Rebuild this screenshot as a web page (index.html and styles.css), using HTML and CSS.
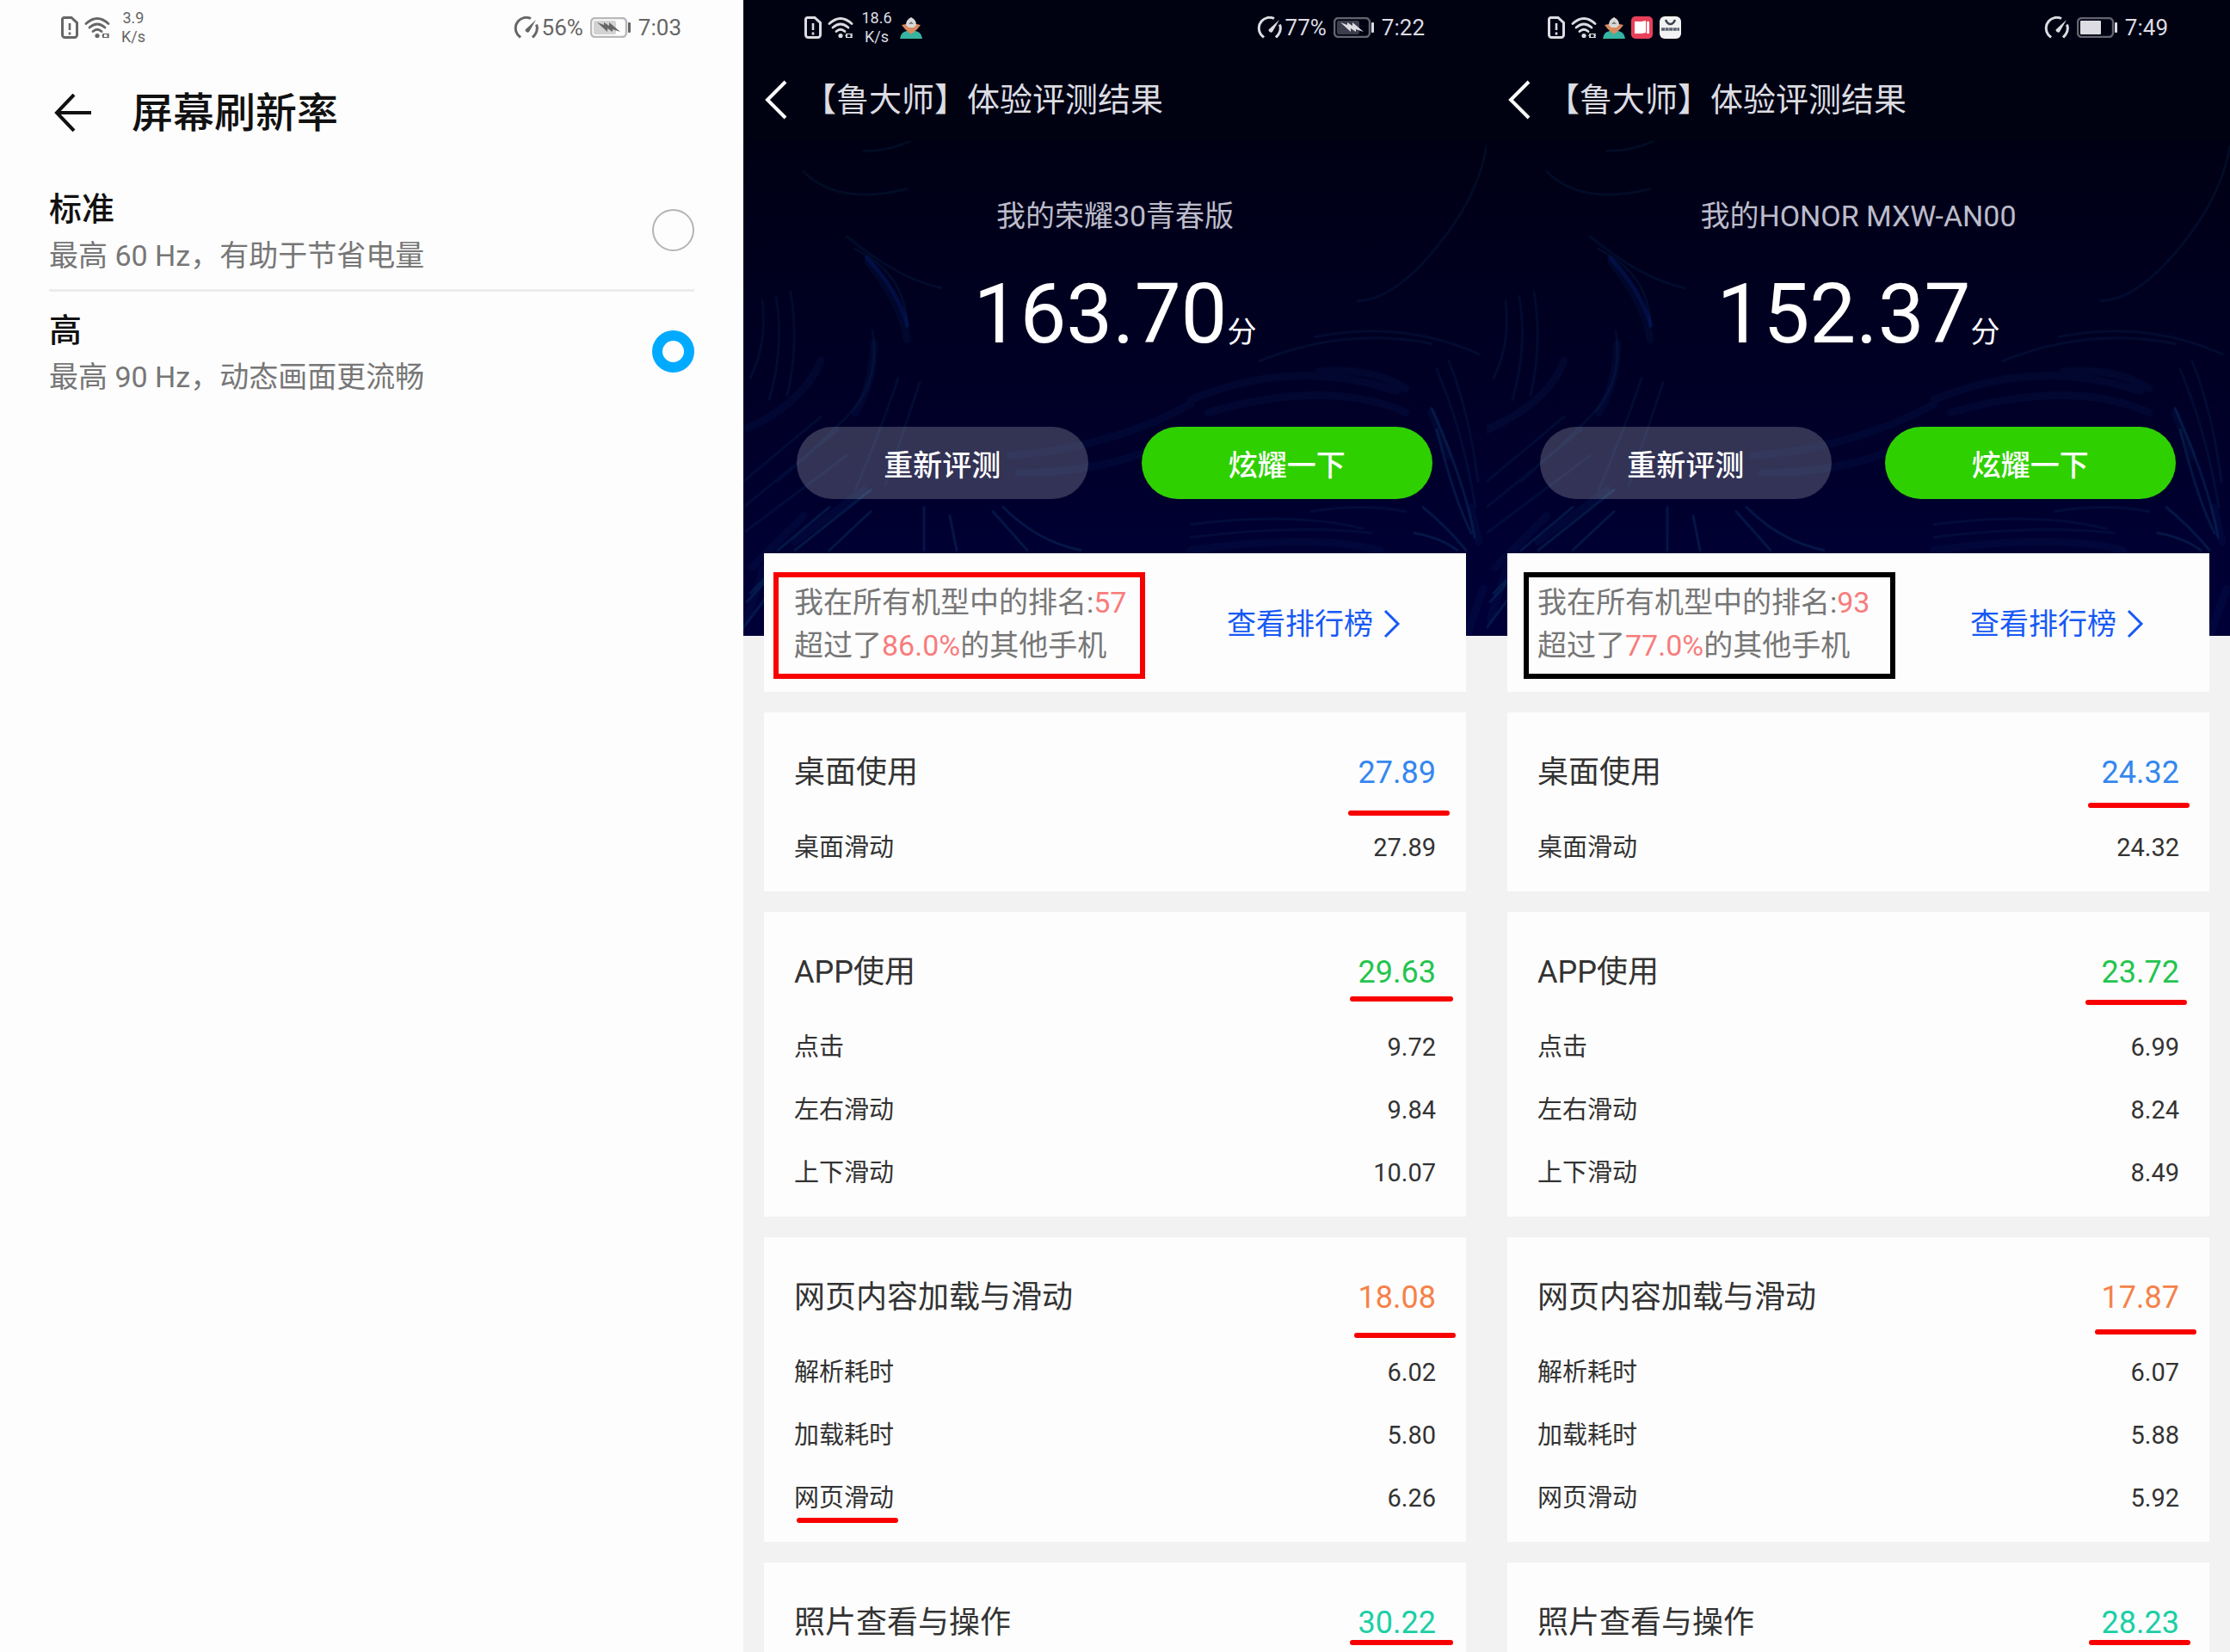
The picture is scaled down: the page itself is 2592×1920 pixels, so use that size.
FILE: index.html
```html
<!DOCTYPE html>
<html lang="zh-CN">
<head>
    <meta charset="UTF-8">
    <meta name="viewport" content="width=device-width, initial-scale=1.0">
    <title>屏幕刷新率 体验评测结果</title>
    <link rel="stylesheet" href="styles.css">
</head>
<body>
    <!-- Shared icons -->
    <svg class="sprite" aria-hidden="true">
        <symbol id="icon-sim" viewBox="0 0 20 26">
            <path d="M3.500 1.500h8.500l6.500 6v14a3 3 0 0 1-3 3h-11a3 3 0 0 1-3-3v-18a2 2 0 0 1 2-2z" fill="none" stroke="currentColor" stroke-width="3"/>
            <path d="M10 8v8M10 18.500v3" stroke="currentColor" stroke-width="2.600"/>
        </symbol>
        <symbol id="icon-wifi" viewBox="0 0 30 26">
            <g fill="none" stroke="currentColor" stroke-width="2.800" stroke-linecap="round">
                <path d="M2 8.500Q15-3.500 28 8.500"/>
                <path d="M6 13Q15 5 24 13"/>
                <path d="M10 17.500Q15 13 20 17.500"/>
            </g>
            <circle cx="15" cy="22.500" r="2.600" fill="currentColor"/>
            <path d="M20 22.500l3-2.500v5zM29.500 22.500l-3-2.500v5z" fill="currentColor"/>
            <path d="M21 20.500h8M21 24.500h8" stroke="currentColor" stroke-width="1"/>
        </symbol>
        <symbol id="icon-gauge" viewBox="0 0 30 26">
            <path d="M8 24.500L4.500 21A12.500 12.500 0 0 1 20 2.500" fill="none" stroke="currentColor" stroke-width="3"/>
            <path d="M26.500 9.500a12.500 12.500 0 0 1-1.500 11.500l-3 3.500" fill="none" stroke="currentColor" stroke-width="3"/>
            <path d="M26 4L18 18a2.800 2.800 0 0 1-4.500-2.500z" fill="currentColor"/>
        </symbol>
        <symbol id="icon-charging" viewBox="0 0 48 24">
            <rect x="1" y="1" width="41" height="22" rx="5" fill="none" stroke="currentColor" stroke-width="2.500" opacity=".45"/>
            <rect x="4" y="4" width="26" height="16" rx="2" fill="currentColor" opacity=".28"/>
            <path d="M8 6l8 3v-3l6 4v-4l13 11-9-3v3l-6-4v4z" fill="currentColor"/>
            <rect x="44" y="6" width="3" height="12" rx="1" fill="currentColor"/>
        </symbol>
        <symbol id="icon-battery" viewBox="0 0 48 24">
            <rect x="1" y="1" width="41" height="22" rx="5" fill="none" stroke="currentColor" stroke-width="2.500" opacity=".45"/>
            <rect x="4" y="4" width="24" height="16" rx="1" fill="currentColor"/>
            <rect x="44" y="6" width="3" height="12" rx="1" fill="currentColor"/>
        </symbol>
        <symbol id="icon-master" viewBox="0 0 26 26">
            <path d="M0 26q1-8 8-9h10q7 1 8 9z" fill="#35b5a2"/>
            <path d="M2 10l5-1 6-5 6 5 5 1-4 5-7 6-7-6z" fill="#d98a5e"/>
            <path d="M7 10q0-6 6-9 6 3 6 9l-3 3h-6z" fill="#d9d9d9"/>
            <path d="M10 9l3-3 3 3z" fill="#7c7c7c"/>
        </symbol>
        <symbol id="icon-book" viewBox="0 0 26 26">
            <rect width="25" height="26" rx="5" fill="#e8405a"/>
            <path d="M4 6h8v14H4zM12 6l5-1v14l-5 1zM18 6h3v14h-3z" fill="#fff"/>
        </symbol>
        <symbol id="icon-news" viewBox="0 0 26 26">
            <rect width="25" height="26" rx="6" fill="#f2f2f2"/>
            <path d="M7 4q2 5 5.500 5T18 4" fill="none" stroke="#3b4250" stroke-width="2.500"/>
            <path d="M2 15h21" stroke="#5b6270" stroke-width="3.500" stroke-dasharray="4 .6"/>
        </symbol>
        <symbol id="icon-arrow" viewBox="0 0 44 44">
            <path d="M43 22H3M23 1L3 22l20 21" fill="none" stroke="currentColor" stroke-width="4"/>
        </symbol>
        <symbol id="icon-back" viewBox="0 0 26 46">
            <path d="M24 2L3 23l21 21" fill="none" stroke="currentColor" stroke-width="4"/>
        </symbol>
        <symbol id="icon-next" viewBox="0 0 20 34">
            <path d="M2 2l15 15L2 32" fill="none" stroke="currentColor" stroke-width="3"/>
        </symbol>
        <symbol id="swirls" viewBox="0 0 864 740" preserveAspectRatio="xMidYMid slice">
            <g fill="none" stroke-linecap="round">
                <g stroke="#0a3a66" stroke-width="3" opacity=".2">
                    <path d="M70 200q40 40 120 20M140 176q30 0 55-12"/>
                    <path d="M120 275q60 50 110 60"/>
                    <path d="M130 290q60 30 60 90"/>
                    <path d="M22 350q6 50-14 90M38 345q10 60-8 120M55 340q10 60-4 120"/>
                    <path d="M150 385q10 60-30 100T40 560"/>
                    <path d="M205 445q-20 60-40 120M180 440q-20 60-50 130"/>
                    <path d="M0 560l90-75M0 590l110-90M0 620l120-90"/>
                    <path d="M864 170q-10 60-60 120t-90 60"/>
                    <path d="M665 392q100-20 190 20M600 420q100-40 200-20"/>
                    <path d="M806 430q30 70 45 160M820 420q24 60 34 140"/>
                    <path d="M660 595q60-10 110 0M520 610q120-15 200 5M520 625q120-15 210-5"/>
                </g>
                <g stroke="#0a4070" stroke-width="3" opacity=".35">
                    <path d="M40 640l60-50M60 640l88-70M100 640l48-45"/>
                    <path d="M8 690l20-20M0 730l30-40M4 700l20-22"/>
                    <path d="M210 590v50M240 600l8 40"/>
                    <path d="M290 595l40 45M302 590q40 40 90 50"/>
                    <path d="M800 475q40 90 50 150M806 500q20 80 40 120"/>
                    <path d="M780 620q30 5 50 20M790 590q30 25 50 50"/>
                </g>
                <g stroke="#0a2f66" stroke-width="9" opacity=".16">
                    <path d="M145 305q40 50 45 90"/>
                    <path d="M520 465q120-50 240-10M540 480q140-40 230 0M670 432q60-5 100 20"/>
                    <path d="M310 530q120-10 210-60M320 550q120 0 200-50"/>
                    <path d="M10 660l60-60M60 630l80-60M0 500q70-30 90-80M130 480q20-30 22-80"/>
                    <path d="M845 590l10 40M800 480l20 50M520 640q140-20 220 0"/>
                    <path d="M4 720l20-60M842 735l18-50"/>
                </g>
                <path d="M143 300q35 35 48 78" stroke="#07207a" stroke-width="5" opacity=".35"/>
            </g>
        </symbol>
    </svg>

    <main class="phones">
        <section class="phone settings">
            <div class="status-bar">
                <svg class="sim"><use href="#icon-sim"/></svg>
                <svg class="wifi"><use href="#icon-wifi"/></svg>
                <span class="speed">3.9<br>K/s</span>
                <div class="status-right">
                    <svg class="gauge"><use href="#icon-gauge"/></svg>
                    <span class="percent">56%</span>
                    <svg class="battery"><use href="#icon-charging"/></svg>
                    <span class="time">7:03</span>
                </div>
            </div>
            <header class="settings-header">
                <button class="icon-button" aria-label="返回"><svg class="arrow"><use href="#icon-arrow"/></svg></button>
                <h1>屏幕刷新率</h1>
            </header>
            <form class="options">
                <label class="option">
                    <span class="option-text">
                        <span class="option-title">标准</span>
                        <span class="option-desc">最高 60 Hz，有助于节省电量</span>
                    </span>
                    <input type="radio" name="rate" value="60">
                </label>
                <label class="option">
                    <span class="option-text">
                        <span class="option-title">高</span>
                        <span class="option-desc">最高 90 Hz，动态画面更流畅</span>
                    </span>
                    <input type="radio" name="rate" value="90" checked>
                </label>
            </form>
        </section>

        <section class="phone result">
            <div class="hero">
                <svg class="swirls" aria-hidden="true"><use href="#swirls"/></svg>
                <div class="top">
                    <div class="status-bar">
                        <svg class="sim"><use href="#icon-sim"/></svg>
                        <svg class="wifi"><use href="#icon-wifi"/></svg>
                        <span class="speed">18.6<br>K/s</span>
                        <svg class="app"><use href="#icon-master"/></svg>
                        <div class="status-right">
                            <svg class="gauge"><use href="#icon-gauge"/></svg>
                            <span class="percent">77%</span>
                            <svg class="battery"><use href="#icon-charging"/></svg>
                            <span class="time">7:22</span>
                        </div>
                    </div>
                    <header class="nav">
                        <button class="icon-button" aria-label="返回"><svg class="back"><use href="#icon-back"/></svg></button>
                        <h2>【鲁大师】体验评测结果</h2>
                    </header>
                </div>
                <p class="device">我的荣耀30青春版</p>
                <p class="score">163.70<span class="unit">分</span></p>
                <div class="actions">
                    <button class="pill">重新评测</button>
                    <button class="pill pill-green">炫耀一下</button>
                </div>
            </div>
            <div class="cards">
                <div class="card rank">
                    <p>我在所有机型中的排名:<em>57</em><br>超过了<em>86.0%</em>的其他手机</p>
                    <a href="#">查看排行榜<svg class="next"><use href="#icon-next"/></svg></a>
                </div>
                <div class="card">
                    <table>
                        <thead><tr><th>桌面使用</th><td class="blue">27.89</td></tr></thead>
                        <tbody>
                            <tr><th>桌面滑动</th><td>27.89</td></tr>
                        </tbody>
                    </table>
                </div>
                <div class="card">
                    <table>
                        <thead><tr><th>APP使用</th><td class="green">29.63</td></tr></thead>
                        <tbody>
                            <tr><th>点击</th><td>9.72</td></tr>
                            <tr><th>左右滑动</th><td>9.84</td></tr>
                            <tr><th>上下滑动</th><td>10.07</td></tr>
                        </tbody>
                    </table>
                </div>
                <div class="card">
                    <table>
                        <thead><tr><th>网页内容加载与滑动</th><td class="orange">18.08</td></tr></thead>
                        <tbody>
                            <tr><th>解析耗时</th><td>6.02</td></tr>
                            <tr><th>加载耗时</th><td>5.80</td></tr>
                            <tr><th>网页滑动</th><td>6.26</td></tr>
                        </tbody>
                    </table>
                </div>
                <div class="card">
                    <table>
                        <thead><tr><th>照片查看与操作</th><td class="teal">30.22</td></tr></thead>
                    </table>
                </div>
            </div>
            <!-- Hand-drawn marks over the result -->
            <svg class="marks" aria-hidden="true">
                <rect x="38" y="668" width="426" height="118"/>
                <path d="M706 945h112M708 1161h114M713 1552h112M65 1767h112M708 1909h114"/>
            </svg>
        </section>

        <section class="phone result">
            <div class="hero">
                <svg class="swirls" aria-hidden="true"><use href="#swirls"/></svg>
                <div class="top">
                    <div class="status-bar">
                        <svg class="sim"><use href="#icon-sim"/></svg>
                        <svg class="wifi"><use href="#icon-wifi"/></svg>
                        <svg class="app"><use href="#icon-master"/></svg>
                        <svg class="app"><use href="#icon-book"/></svg>
                        <svg class="app"><use href="#icon-news"/></svg>
                        <div class="status-right">
                            <svg class="gauge"><use href="#icon-gauge"/></svg>
                            <svg class="battery"><use href="#icon-battery"/></svg>
                            <span class="time">7:49</span>
                        </div>
                    </div>
                    <header class="nav">
                        <button class="icon-button" aria-label="返回"><svg class="back"><use href="#icon-back"/></svg></button>
                        <h2>【鲁大师】体验评测结果</h2>
                    </header>
                </div>
                <p class="device">我的HONOR MXW-AN00</p>
                <p class="score">152.37<span class="unit">分</span></p>
                <div class="actions">
                    <button class="pill">重新评测</button>
                    <button class="pill pill-green">炫耀一下</button>
                </div>
            </div>
            <div class="cards">
                <div class="card rank">
                    <p>我在所有机型中的排名:<em>93</em><br>超过了<em>77.0%</em>的其他手机</p>
                    <a href="#">查看排行榜<svg class="next"><use href="#icon-next"/></svg></a>
                </div>
                <div class="card">
                    <table>
                        <thead><tr><th>桌面使用</th><td class="blue">24.32</td></tr></thead>
                        <tbody>
                            <tr><th>桌面滑动</th><td>24.32</td></tr>
                        </tbody>
                    </table>
                </div>
                <div class="card">
                    <table>
                        <thead><tr><th>APP使用</th><td class="green">23.72</td></tr></thead>
                        <tbody>
                            <tr><th>点击</th><td>6.99</td></tr>
                            <tr><th>左右滑动</th><td>8.24</td></tr>
                            <tr><th>上下滑动</th><td>8.49</td></tr>
                        </tbody>
                    </table>
                </div>
                <div class="card">
                    <table>
                        <thead><tr><th>网页内容加载与滑动</th><td class="orange">17.87</td></tr></thead>
                        <tbody>
                            <tr><th>解析耗时</th><td>6.07</td></tr>
                            <tr><th>加载耗时</th><td>5.88</td></tr>
                            <tr><th>网页滑动</th><td>5.92</td></tr>
                        </tbody>
                    </table>
                </div>
                <div class="card">
                    <table>
                        <thead><tr><th>照片查看与操作</th><td class="teal">28.23</td></tr></thead>
                    </table>
                </div>
            </div>
            <svg class="marks" aria-hidden="true">
                <rect class="black" x="46" y="668" width="426" height="118"/>
                <path d="M702 936h112M699 1165h112M710 1548h112M703 1909h112"/>
            </svg>
        </section>
    </main>
</body>
</html>
```
FILE: styles.css
```css
* {
    box-sizing: border-box;
}
body {
    margin: 0;
    font-family: Roboto, "Noto Sans CJK SC", sans-serif;
    background-color: #fdfdfd;
}
h1, h2, p {
    margin: 0;
    font-weight: normal;
}
.sprite {
    display: none;
}
.phones {
    display: grid;
    grid-template-columns: repeat(3, 1fr);
    height: 100vh;
    overflow: hidden;
}
.phone {
    position: relative;
}

/* Status bar */
.status-bar {
    display: flex;
    align-items: center;
    gap: 7px;
    height: 64px;
    padding: 0 72px 0 71px;
    font-size: 26px;
}
.status-right {
    display: flex;
    align-items: center;
    gap: 8px;
    margin-left: auto;
}
.speed {
    width: 40px;
    font-size: 18px;
    line-height: 22px;
    text-align: center;
}
.sim {
    width: 20px;
    height: 26px;
}
.wifi, .gauge {
    width: 30px;
    height: 26px;
}
.gauge + .percent {
    margin-left: -5px;
}
.battery {
    width: 48px;
    height: 24px;
}
.app {
    width: 26px;
    height: 26px;
}
.icon-button {
    display: flex;
    padding: 0;
    border: none;
    background: none;
    color: inherit;
    cursor: pointer;
}

/* Refresh rate settings */
.settings {
    color: #111;
}
.settings .status-bar {
    color: #666;
}
.settings-header {
    display: flex;
    align-items: center;
    gap: 46px;
    height: 134px;
    padding: 0 63px;
}
.settings-header h1 {
    padding-top: 2px;
    font-size: 48px;
    line-height: 64px;
    font-weight: 500;
}
.arrow {
    width: 44px;
    height: 44px;
}
.options {
    padding: 0 57px;
}
.option {
    display: flex;
    align-items: center;
    justify-content: space-between;
    height: 141px;
    border-bottom: 3px solid transparent;
}
.option:first-child {
    border-bottom-color: #ececec;
}
.option-text {
    display: flex;
    flex-direction: column;
    padding-top: 6px;
}
.option-title {
    font-size: 38px;
    line-height: 54px;
    font-weight: 500;
}
.option-desc {
    font-size: 34px;
    line-height: 54px;
    color: #777;
}
.option input {
    appearance: none;
    width: 49px;
    height: 49px;
    margin: 0;
    border: 2px solid #b5b5b5;
    border-radius: 50%;
}
.option input:checked {
    border: 12px solid #00aaff;
}

/* Benchmark result */
.result {
    background-color: #f2f2f2;
    color: #333;
}
.hero {
    position: relative;
    padding-bottom: 159px;
    background: linear-gradient(#000014 22%, #000038);
    color: #fff;
    text-align: center;
}
.swirls {
    position: absolute;
    inset: 0;
    width: 100%;
    height: 100%;
}
.top {
    position: relative;
    background-color: #000212;
    color: #dcdce2;
}
.nav {
    display: flex;
    align-items: center;
    gap: 19px;
    height: 100px;
    padding: 4px 25px 0;
}
.nav h2 {
    font-size: 38px;
    line-height: 52px;
}
.back {
    width: 26px;
    height: 46px;
    color: #fff;
}
.device {
    position: relative;
    padding-top: 62px;
    font-size: 34px;
    line-height: 50px;
    color: #bcbcca;
}
.score {
    position: relative;
    padding-top: 33px;
    font-size: 96px;
    line-height: 112px;
}
.unit {
    font-size: 34px;
    line-height: 34px;
}
.actions {
    position: relative;
    display: grid;
    grid-template-columns: 1fr 1fr;
    gap: 62px;
    padding: 75px 63px 0 62px;
}
.pill {
    height: 84px;
    border: none;
    border-radius: 42px;
    background-color: rgba(255, 255, 255, 0.2);
    color: #fff;
    font-family: inherit;
    font-size: 34px;
    font-weight: 500;
    cursor: pointer;
}
.pill-green {
    background-color: #2fd000;
}
.cards {
    position: relative;
    display: flex;
    flex-direction: column;
    gap: 24px;
    margin-top: -96px;
    padding: 0 24px;
}
.card {
    padding: 20px 35px 15px;
    background-color: #fdfdfd;
}
.rank {
    display: flex;
    align-items: center;
    justify-content: space-between;
    height: 161px;
    padding: 3px 76px 0 35px;
    font-size: 34px;
    line-height: 50px;
    color: #777;
}
.rank em {
    font-style: normal;
    color: #f87c7c;
}
.rank a {
    display: flex;
    align-items: center;
    gap: 12px;
    color: #1759f5;
    text-decoration: none;
}
.next {
    width: 20px;
    height: 34px;
}
table {
    width: 100%;
    border-collapse: collapse;
    font-size: 29px;
    line-height: 48px;
}
th, td {
    height: 73px;
    padding: 0;
    font-weight: normal;
    text-align: left;
}
td {
    text-align: right;
}
thead th, thead td {
    height: 100px;
    font-size: 36px;
}
.blue {
    color: #3587f0;
}
.green {
    color: #25c450;
}
.orange {
    color: #f5824a;
}
.teal {
    color: #1ccfa5;
}
.marks {
    position: absolute;
    inset: 0;
    width: 100%;
    height: 100%;
    fill: none;
    stroke: #f80000;
    stroke-width: 6px;
    stroke-linecap: round;
    pointer-events: none;
}
.marks .black {
    stroke: #000;
}
```
